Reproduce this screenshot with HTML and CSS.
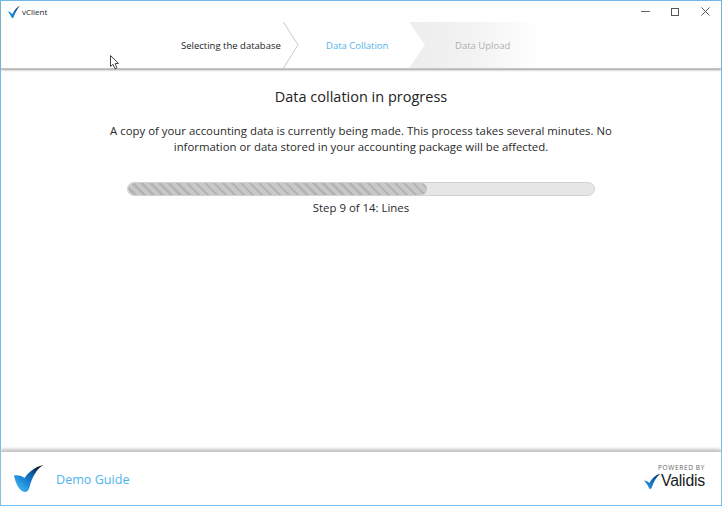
FILE: index.html
```html
<!DOCTYPE html>
<html lang="en">
<head>
    <meta charset="UTF-8">
    <title>vClient</title>
    <link rel="stylesheet" href="styles.css">
</head>
<body>
    <div class="window">
        <header class="header">
            <div class="titlebar">
                <svg class="app-icon" width="14" height="14" viewBox="0 0 14 14">
                    <defs>
                        <linearGradient id="iconFill" x1="0" y1="1" x2="1" y2="0">
                            <stop offset="0" stop-color="#2a9be6"/>
                            <stop offset="0.55" stop-color="#0d6cba"/>
                            <stop offset="1" stop-color="#08182e"/>
                        </linearGradient>
                    </defs>
                    <path d="M1 6.5 C3 6.8 4.5 7.8 5.4 9.2 C7 5.6 9.6 2.6 12.8 .8 C10.2 4 8 8 6.4 12.8 C5.8 13.2 5 13 4.6 12.4 C3.8 10.4 2.6 8.4 1 6.5 Z" fill="url(#iconFill)"/>
                </svg>
                <span class="app-name">vClient</span>
                <div class="win-controls">
                    <span class="win-min"></span>
                    <span class="win-max"></span>
                    <svg class="win-close" width="10" height="10" viewBox="0 0 10 10">
                        <path d="M.5 .5 L9.5 9.5 M9.5 .5 L.5 9.5" stroke="#555" stroke-width="1.1" fill="none"/>
                    </svg>
                </div>
            </div>
            <div class="steps">
                <span class="step step-done">Selecting the database</span>
                <svg class="chevron" width="16" height="46" viewBox="0 0 16 46">
                    <path d="M.5 0 L15 23 L.5 46" stroke="#c9c9c9" stroke-width="1" fill="none"/>
                </svg>
                <span class="step step-current">Data Collation</span>
                <span class="step step-next">Data Upload</span>
            </div>
        </header>

        <main class="content">
            <h1 class="heading">Data collation in progress</h1>
            <p class="intro">A copy of your accounting data is currently being made. This process takes several minutes. No information or data stored in your accounting package will be affected.</p>
            <div class="progress">
                <div class="progress-fill" style="width: 64.2%"></div>
            </div>
            <div class="progress-label">Step 9 of 14: Lines</div>
        </main>

        <footer class="footer">
            <svg class="logo" width="30" height="28" viewBox="0 0 30 28">
                <defs>
                    <linearGradient id="logoFill" x1="0.1" y1="0.9" x2="0.95" y2="0">
                        <stop offset="0" stop-color="#45b5f0"/>
                        <stop offset="0.35" stop-color="#1a85d5"/>
                        <stop offset="0.62" stop-color="#0d5fa8"/>
                        <stop offset="0.88" stop-color="#0a1a33"/>
                        <stop offset="1" stop-color="#000"/>
                    </linearGradient>
                </defs>
                <path d="M0 10.5 C3 10 7 10.4 10.5 13 C14 7.5 21 2 29 0 C23 4 18.5 11 15.5 22 C14.8 26 12 28 9 26.6 C4 24.5 1.5 17 0 10.5 Z" fill="url(#logoFill)"/>
            </svg>
            <span class="guide">Demo Guide</span>
            <div class="powered">
                <span class="powered-by">POWERED BY</span>
                <div class="brand">
                    <svg width="17" height="17" viewBox="0 0 17 17">
                        <path d="M0 7.5 C2 7.5 4 8.4 5.4 10 C7.5 5.8 11.5 2 16.5 .5 C12.5 3.8 9.3 9 7.4 15.5 L5.5 16 C4 12.6 2.2 9.8 0 7.5 Z" fill="url(#iconFill)"/>
                    </svg>
                    <span class="brand-name">Validis</span>
                </div>
            </div>
        </footer>

        <svg class="cursor" width="11" height="15" viewBox="0 0 11 15">
            <path d="M.5 .5 L.5 11.5 L3 9.3 L5 13.8 L7 12.9 L5.1 8.6 L8.5 8.4 Z" fill="#fff" stroke="#444" stroke-width="1"/>
        </svg>
    </div>
</body>
</html>
```

FILE: styles.css
```css
* {
    box-sizing: border-box;
}

html, body {
    margin: 0;
    height: 100%;
}

body {
    font-family: "Open Sans", "Noto Sans", sans-serif;
    background: #fff;
}

.window {
    position: relative;
    display: flex;
    flex-direction: column;
    height: 506px;
    border: 1px solid #6ebcf0;
    background: #fff;
}

.header {
    height: 68px;
    box-shadow: 0 1px 2px #9a9a9a;
    border-bottom: 1px solid #c4c4c4;
}

.titlebar {
    display: flex;
    align-items: center;
    height: 21px;
    padding-left: 6px;
}

.app-name {
    margin-left: 1px;
    font-size: 8px;
    color: #222;
}

.win-controls {
    display: flex;
    align-items: center;
    margin-left: auto;
    padding-right: 11px;
}

.win-min {
    width: 9px;
    height: 1px;
    background: #666;
}

.win-max {
    width: 8px;
    height: 8px;
    margin-left: 21px;
    border: 1px solid #555;
}

.win-close {
    width: 9px;
    height: 9px;
    margin-left: 22px;
}

.steps {
    display: flex;
    align-items: center;
    height: 46px;
    padding-left: 180px;
    font-size: 9.5px;
    white-space: nowrap;
}

.step-done {
    width: 102px;
    color: #222;
}

.chevron {
    flex: none;
}

.step-current {
    width: 110px;
    padding-left: 27px;
    color: #4fb3ec;
}

.step-next {
    display: flex;
    align-items: center;
    width: 131px;
    height: 46px;
    padding-left: 46px;
    color: #b0b0b0;
    background: linear-gradient(90deg, #ededed, #f3f3f3 50%, #fff);
    clip-path: polygon(0 0, 100% 0, 100% 100%, 0 100%, 16px 50%);
}

.content {
    flex: 1;
    display: flex;
    flex-direction: column;
    align-items: center;
    color: #2a2a2a;
}

.heading {
    margin: 18px 0 0;
    font-size: 14.5px;
    line-height: 20px;
    font-weight: 400;
    color: #222;
}

.intro {
    width: 560px;
    margin: 16px 0 0;
    font-size: 11.38px;
    line-height: 16px;
    text-align: center;
}

.progress {
    width: 468px;
    height: 14px;
    margin-top: 27px;
    border: 1px solid #d2d2d2;
    border-radius: 7px;
    background: #e6e6e6;
    overflow: hidden;
}

.progress-fill {
    height: 100%;
    border-radius: 7px;
    background: repeating-linear-gradient(45deg, #c8c8c8 0, #c8c8c8 4px, #b4b4b4 4px, #b4b4b4 6.4px);
}

.progress-label {
    margin-top: 4px;
    font-size: 11.4px;
    line-height: 16px;
}

.footer {
    display: flex;
    align-items: center;
    height: 54px;
    padding: 0 16px 0 13px;
    border-top: 1px solid #c8c8c8;
    box-shadow: 0 -2px 3px #c4c4c4;
}

.logo {
    flex: none;
}

.guide {
    margin-left: 12px;
    padding-top: 1px;
    font-size: 12.6px;
    color: #4fb3ec;
}

.powered {
    display: flex;
    flex-direction: column;
    align-items: flex-end;
    margin-left: auto;
    padding-bottom: 3px;
}

.powered-by {
    font-size: 6.5px;
    line-height: 8px;
    letter-spacing: .65px;
    color: #666;
}

.brand {
    display: flex;
    align-items: center;
    height: 18px;
}

.brand-name {
    font-family: "Liberation Sans", sans-serif;
    font-size: 15.8px;
    line-height: 18px;
    letter-spacing: -.2px;
    color: #1a1a1a;
}

.cursor {
    position: absolute;
    left: 109px;
    top: 54px;
}
```
